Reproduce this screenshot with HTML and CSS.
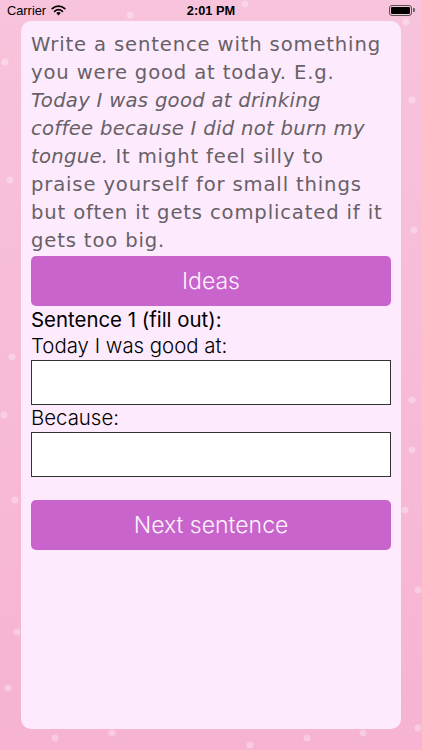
FILE: index.html
```html
<!DOCTYPE html>
<html lang="en">
<head>
    <meta charset="UTF-8">
    <meta name="viewport" content="width=device-width, initial-scale=1.0">
    <title>Good at today</title>
    <link rel="stylesheet" href="styles.css">
</head>
<body>

<div class="status-bar">
    <div class="status-left">
        <span>Carrier</span>
        <svg class="wifi" width="15" height="11" viewBox="0 0 15 11">
            <path d="M7.5 10.5 L5.3 8.1 A3.2 3.2 0 0 1 9.7 8.1 Z" fill="#000"/>
            <path d="M3.6 6.3 A5.6 5.6 0 0 1 11.4 6.3" stroke="#000" stroke-width="1.7" fill="none" stroke-linecap="round"/>
            <path d="M1.2 3.7 A9 9 0 0 1 13.8 3.7" stroke="#000" stroke-width="1.7" fill="none" stroke-linecap="round"/>
        </svg>
    </div>
    <div class="status-time">2:01 PM</div>
    <div class="status-right">
        <div class="battery"><div class="battery-level"></div></div>
        <div class="battery-tip"></div>
    </div>
</div>

<div class="card">
    <p class="intro">Write a sentence with something<br>
        you were good at today. E.g.<br>
        <em>Today I was good at drinking<br>
        coffee because I did not burn my<br>
        tongue.</em> It might feel silly to<br>
        praise yourself for small things<br>
        but often it gets complicated if it<br>
        gets too big.</p>

    <button class="btn">Ideas</button>

    <div class="label title">Sentence 1 (fill out):</div>
    <label class="label" for="goodAt">Today I was good at:</label>
    <input type="text" id="goodAt" class="field">
    <label class="label" for="because">Because:</label>
    <input type="text" id="because" class="field">

    <button class="btn next">Next sentence</button>
</div>

</body>
</html>
```

FILE: styles.css
```css
* {
    box-sizing: border-box;
    margin: 0;
    padding: 0;
}
html, body {
    height: 100%;
}
body {
    width: 422px;
    height: 750px;
    overflow: hidden;
    font-family: Inter, 'Liberation Sans', sans-serif;
    background:
        radial-gradient(circle at 5px 62px, rgba(255,255,255,0.35) 3px, transparent 4px),
        radial-gradient(circle at 130px 15px, rgba(255,255,255,0.3) 3px, transparent 4px),
        radial-gradient(circle at 245px 4px, rgba(255,255,255,0.3) 3px, transparent 4px),
        radial-gradient(circle at 406px 22px, rgba(255,255,255,0.3) 3px, transparent 4px),
        radial-gradient(circle at 412px 100px, rgba(255,255,255,0.3) 3px, transparent 4px),
        radial-gradient(circle at 10px 180px, rgba(255,255,255,0.3) 3px, transparent 4px),
        radial-gradient(circle at 414px 230px, rgba(255,255,255,0.3) 3px, transparent 4px),
        radial-gradient(circle at 12px 357px, rgba(255,255,255,0.3) 3px, transparent 4px),
        radial-gradient(circle at 412px 400px, rgba(255,255,255,0.3) 3px, transparent 4px),
        radial-gradient(circle at 4px 415px, rgba(255,255,255,0.3) 3px, transparent 4px),
        radial-gradient(circle at 412px 450px, rgba(255,255,255,0.3) 3px, transparent 4px),
        radial-gradient(circle at 15px 500px, rgba(255,255,255,0.3) 3px, transparent 4px),
        radial-gradient(circle at 405px 510px, rgba(255,255,255,0.3) 3px, transparent 4px),
        radial-gradient(circle at 17px 632px, rgba(255,255,255,0.3) 3px, transparent 4px),
        radial-gradient(circle at 418px 590px, rgba(255,255,255,0.3) 3px, transparent 4px),
        radial-gradient(circle at 8px 688px, rgba(255,255,255,0.3) 3px, transparent 4px),
        radial-gradient(circle at 418px 728px, rgba(255,255,255,0.3) 3px, transparent 4px),
        radial-gradient(circle at 55px 738px, rgba(255,255,255,0.3) 3px, transparent 4px),
        radial-gradient(circle at 112px 733px, rgba(255,255,255,0.3) 3px, transparent 4px),
        radial-gradient(circle at 250px 745px, rgba(255,255,255,0.3) 3px, transparent 4px),
        radial-gradient(circle at 307px 738px, rgba(255,255,255,0.3) 3px, transparent 4px),
        radial-gradient(circle at 363px 733px, rgba(255,255,255,0.3) 3px, transparent 4px),
        linear-gradient(180deg, #f8c3dc 0%, #f7bbd7 50%, #f6b3d2 100%);
}

/* status bar */
.status-bar {
    height: 20px;
    display: flex;
    align-items: center;
    justify-content: space-between;
    padding: 0 7px;
    font-family: 'Liberation Sans', Arial, sans-serif;
    font-size: 12.8px;
    color: #000;
    position: relative;
}
.status-left {
    display: flex;
    align-items: center;
    gap: 5px;
}
.status-time {
    position: absolute;
    left: 0;
    right: 0;
    text-align: center;
    font-weight: bold;
}
.status-right {
    display: flex;
    align-items: center;
}
.battery {
    width: 23px;
    height: 11px;
    border: 1px solid #555;
    border-radius: 3px;
    padding: 1px;
}
.battery-level {
    width: 100%;
    height: 100%;
    background: #000;
    border-radius: 1px;
}
.battery-tip {
    width: 2px;
    height: 4px;
    background: #666;
    border-radius: 0 1px 1px 0;
    margin-left: 1px;
}

/* main card */
.card {
    margin: 1px 21px 0;
    height: 708px;
    background: #fdeafd;
    border-radius: 10px;
    padding: 10px;
}
.intro {
    font-family: 'DejaVu Sans', sans-serif;
    font-size: 19.6px;
    letter-spacing: 0.85px;
    line-height: 28px;
    color: #676167;
    white-space: nowrap;
}
.intro em {
    font-style: italic;
    letter-spacing: 0.3px;
}
.btn {
    display: block;
    width: 100%;
    height: 50px;
    border: none;
    border-radius: 5px;
    background: #c964cc;
    color: #fdf3fc;
    font-family: Inter, 'Liberation Sans', sans-serif;
    font-weight: 300;
    font-size: 23px;
    margin-top: 1px;
    cursor: pointer;
}
.btn.next {
    margin-top: 23px;
}
.label {
    display: block;
    font-size: 20.4px;
    font-weight: 300;
    line-height: 26px;
    color: #000;
}
.label.title {
    margin-top: 1px;
    font-weight: 400;
}
.field {
    display: block;
    width: 100%;
    height: 45px;
    margin-top: 1px;
    border: 1px solid #333;
    background: #fff;
    font-size: 18px;
    padding: 0 8px;
}
```
